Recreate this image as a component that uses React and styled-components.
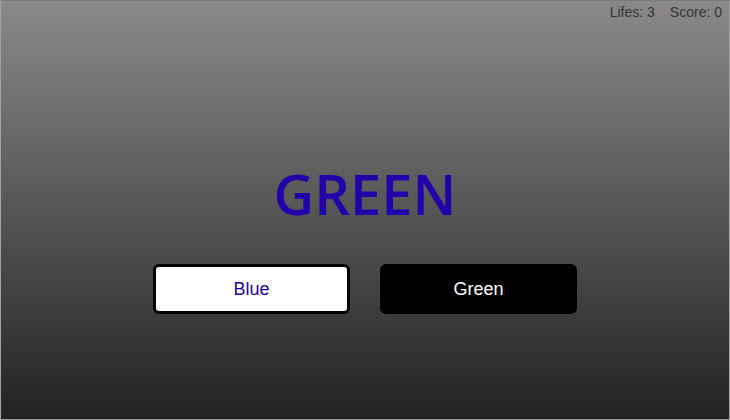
import React from "react";
import styled, { createGlobalStyle } from "styled-components";

const Global = createGlobalStyle`
  html, body { margin: 0; padding: 0; }
  body { width: 730px; height: 420px; overflow: hidden; }
  * { box-sizing: border-box; }
`;

const Stage = styled.div`
  width: 730px;
  height: 420px;
  border: 1px solid #a3a3a3;
  border-top-color: #7a7a7a;
  background: linear-gradient(to bottom, #8b8989 0%, #222222 100%);
  display: flex;
  flex-direction: column;
  align-items: center;
  font-family: "Liberation Sans", Arial, sans-serif;
`;

const StatusBar = styled.div`
  align-self: stretch;
  display: flex;
  justify-content: flex-end;
  gap: 15px;
  padding: 3px 7px 0 0;
  font-size: 14px;
  line-height: 16px;
  color: #333333;
`;

const Stat = styled.span``;

const Word = styled.div`
  margin-top: 145px;
  font-family: "Open Sans", "Noto Sans", sans-serif;
  font-weight: 600;
  font-size: 56px;
  line-height: 56px;
  color: ${(p) => p.$color};
  letter-spacing: 0;
`;

const Choices = styled.div`
  margin-top: 43px;
  display: flex;
  gap: 30px;
`;

const Choice = styled.button`
  width: 197px;
  height: 50px;
  border: 3px solid #000;
  border-radius: 6px;
  background: ${(p) => (p.$dark ? "#000" : "#fff")};
  color: ${(p) => (p.$dark ? "#fff" : "#2200aa")};
  font-family: "Liberation Sans", Arial, sans-serif;
  font-size: 18px;
  line-height: 20px;
  padding: 0;
  cursor: pointer;
`;

export default function App() {
  return (
    <>
      <Global />
      <Stage>
        <StatusBar>
          <Stat>Lifes: 3</Stat>
          <Stat>Score: 0</Stat>
        </StatusBar>
        <Word $color="#2200aa">GREEN</Word>
        <Choices>
          <Choice>Blue</Choice>
          <Choice $dark>Green</Choice>
        </Choices>
      </Stage>
    </>
  );
}
